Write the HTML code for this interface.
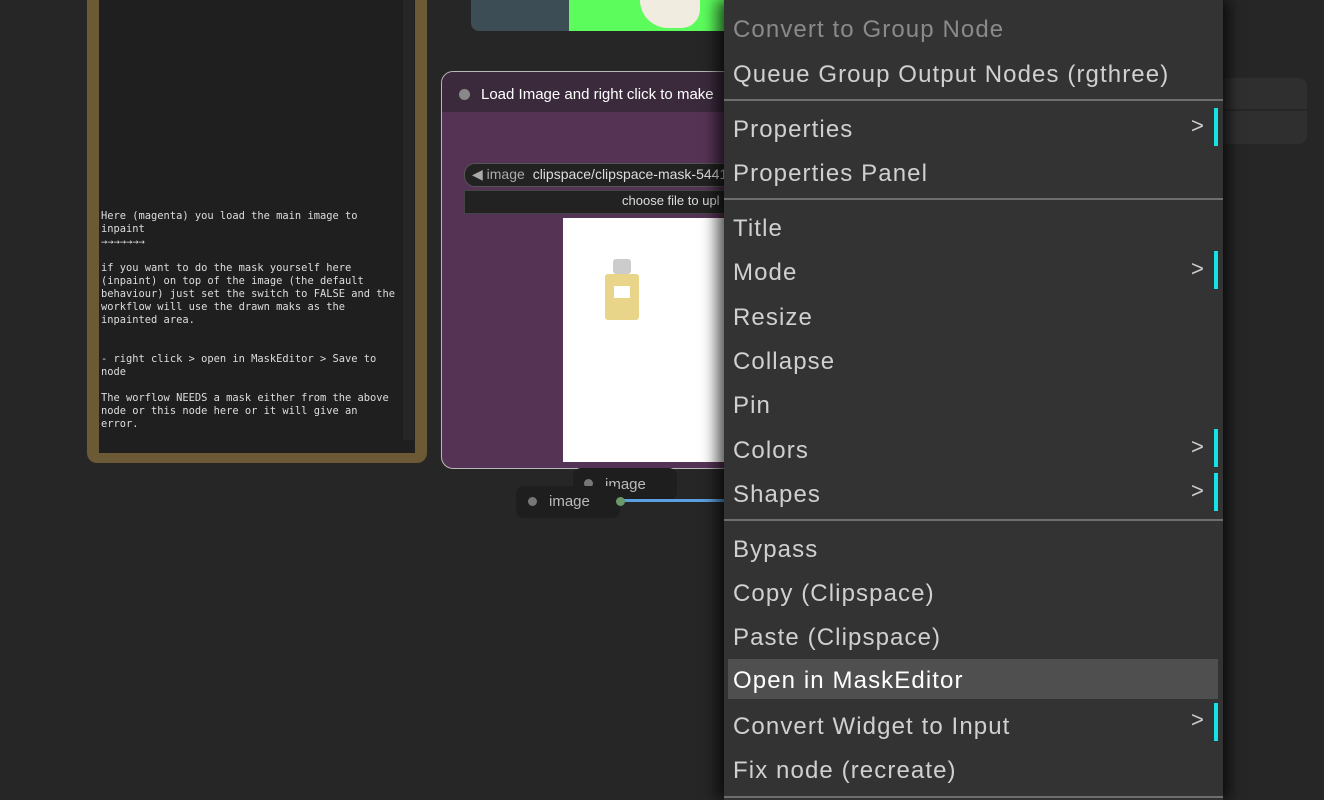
<!DOCTYPE html>
<html><head><style>
body{margin:0;width:1324px;height:800px;background:#262626;position:relative;overflow:hidden;font-family:"Liberation Sans",sans-serif}
.abs{position:absolute}
.menu{left:724px;top:0;width:499px;height:800px;background:#333;box-shadow:-8px 0 14px rgba(0,0,0,.6),6px 0 12px rgba(0,0,0,.6)}
.it{position:absolute;left:9px;font-size:24px;letter-spacing:1.1px;color:#d0d0d0;line-height:30px;white-space:nowrap}
.sep{position:absolute;left:0;width:499px;height:2px;background:#6e6e6e}
.arr{position:absolute;left:467px;font-size:22px;color:#ccc}
.bar{position:absolute;left:490px;width:4px;height:38px;background:#17e0e6}
.note{left:87px;top:-20px;width:340px;height:483px;background:#6b5a35;border-radius:10px}
.noteIn{left:99px;top:0;width:316px;height:453px;background:#1f1f1f}
.mono{font-family:"DejaVu Sans Mono","Liberation Mono",monospace;font-size:10.4px;line-height:13px;color:#ddd;white-space:pre}
</style></head><body>
<div class="abs note"></div>
<div class="abs noteIn"></div>
<div class="abs" style="left:403px;top:0;width:11px;height:440px;background:#262626"></div>
<div class="abs mono" style="left:101px;top:210px">Here (magenta) you load the main image to
inpaint
→→→→→→→

if you want to do the mask yourself here
(inpaint) on top of the image (the default
behaviour) just set the switch to FALSE and the
workflow will use the drawn maks as the
inpainted area.


- right click > open in MaskEditor > Save to
node

The worflow NEEDS a mask either from the above
node or this node here or it will give an
error.</div>

<div class="abs" style="left:471px;top:-20px;width:260px;height:51px;background:#3d4d55;border-radius:8px"></div>
<div class="abs" style="left:569px;top:0;width:160px;height:31px;background:#5cfc5c"></div>
<div class="abs" style="left:640px;top:0;width:60px;height:28px;background:#f0ece0;border-radius:0 0 20px 30px"></div>

<div class="abs" style="left:441px;top:71px;width:300px;height:396px;border:1.5px solid #b8b8b8;border-radius:12px;background:#553355;overflow:hidden">
 <div style="height:40px;background:#3a2a3c"></div>
</div>
<div class="abs" style="left:459px;top:89px;width:11px;height:11px;border-radius:50%;background:#888"></div>
<div class="abs" style="left:481px;top:86px;color:#fff;font-size:15px;white-space:nowrap">Load Image and right click to make</div>
<div class="abs" style="left:464px;top:163px;width:270px;height:22px;background:#222;border:1px solid #555;border-radius:11px"></div>
<div class="abs" style="left:472px;top:166px;font-size:14px;color:#aaa;white-space:nowrap">◀ image <span style="color:#ddd;margin-left:4px">clipspace/clipspace-mask-54417</span></div>
<div class="abs" style="left:464px;top:190px;width:270px;height:22px;background:#222;border:1px solid #444"></div>
<div class="abs" style="left:622px;top:193px;font-size:13px;color:#ddd;white-space:nowrap">choose file to upl</div>
<div class="abs" style="left:563px;top:218px;width:170px;height:244px;background:#fff"></div>
<div class="abs" style="left:605px;top:274px;width:34px;height:46px;background:#e8d58a;border-radius:3px"></div>
<div class="abs" style="left:613px;top:259px;width:18px;height:15px;background:#ccc;border-radius:3px"></div>
<div class="abs" style="left:614px;top:286px;width:16px;height:12px;background:#fff"></div>

<div class="abs" style="left:573px;top:468px;width:104px;height:32px;background:#1e1e1e;border-radius:8px"></div>
<div class="abs" style="left:584px;top:479px;width:9px;height:9px;border-radius:50%;background:#777"></div>
<div class="abs" style="left:605px;top:476px;color:#bbb;font-size:15px">image</div>
<div class="abs" style="left:620px;top:499px;width:110px;height:3px;background:#5aa0e0"></div>
<div class="abs" style="left:516px;top:486px;width:104px;height:32px;background:#1e1e1e;border-radius:8px"></div>
<div class="abs" style="left:528px;top:497px;width:9px;height:9px;border-radius:50%;background:#777"></div>
<div class="abs" style="left:549px;top:493px;color:#bbb;font-size:15px">image</div>
<div class="abs" style="left:616px;top:497px;width:9px;height:9px;border-radius:50%;background:#6a9a6a"></div>

<div class="abs" style="left:1220px;top:78px;width:87px;height:31px;background:#2f2f2f;border-radius:0 8px 0 0"></div>
<div class="abs" style="left:1220px;top:111px;width:87px;height:33px;background:#2f2f2f;border-radius:0 0 8px 0"></div>

<div class="abs menu">
 <div class="it" style="top:15px;color:#8a8a8a">Convert to Group Node</div>
 <div class="it" style="top:60px">Queue Group Output Nodes (rgthree)</div>
 <div class="sep" style="top:99px"></div>
 <div class="it" style="top:115px">Properties</div><div class="arr" style="top:113px">&gt;</div><div class="bar" style="top:108px"></div>
 <div class="it" style="top:159px">Properties Panel</div>
 <div class="sep" style="top:198px"></div>
 <div class="it" style="top:214px">Title</div>
 <div class="it" style="top:258px">Mode</div><div class="arr" style="top:256px">&gt;</div><div class="bar" style="top:251px"></div>
 <div class="it" style="top:303px">Resize</div>
 <div class="it" style="top:347px">Collapse</div>
 <div class="it" style="top:391px">Pin</div>
 <div class="it" style="top:436px">Colors</div><div class="arr" style="top:434px">&gt;</div><div class="bar" style="top:429px"></div>
 <div class="it" style="top:480px">Shapes</div><div class="arr" style="top:478px">&gt;</div><div class="bar" style="top:473px"></div>
 <div class="sep" style="top:519px"></div>
 <div class="it" style="top:535px">Bypass</div>
 <div class="it" style="top:579px">Copy (Clipspace)</div>
 <div class="it" style="top:623px">Paste (Clipspace)</div>
 <div class="abs" style="left:4px;top:659px;width:490px;height:40px;background:#4f4f4f"></div>
 <div class="it" style="top:666px;color:#fff">Open in MaskEditor</div>
 <div class="it" style="top:712px">Convert Widget to Input</div><div class="arr" style="top:707px">&gt;</div><div class="bar" style="top:703px"></div>
 <div class="it" style="top:756px">Fix node (recreate)</div>
 <div class="sep" style="top:796px"></div>
</div>
</body></html>
